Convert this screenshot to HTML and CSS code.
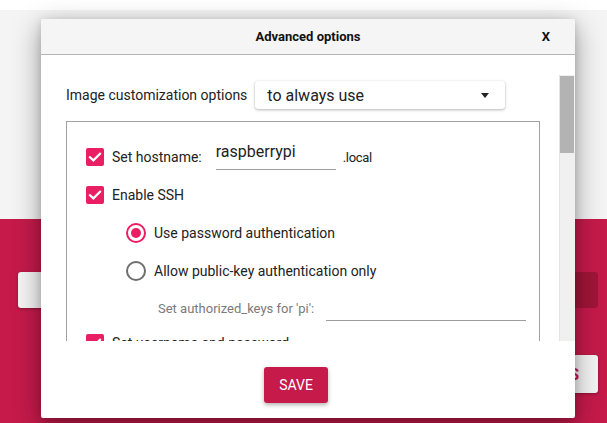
FILE: index.html
```html
<!DOCTYPE html>
<html>
<head>
<meta charset="utf-8">
<link rel="stylesheet" href="styles.css">
</head>
<body>
<div class="app">
  <div class="app-strip"></div>
  <div class="app-top"></div>
  <div class="app-main">
    <div class="app-row">
      <div class="app-btn light">CHOOSE OS</div>
      <div class="app-btn dark">WRITE</div>
    </div>
    <div class="app-row end">
      <div class="app-btn light small"><span class="app-glyph">S</span></div>
    </div>
  </div>
</div>

<div class="dialog">
  <div class="dlg-header">
    <span></span>
    <span class="dlg-title">Advanced options</span>
    <span class="dlg-close">X</span>
  </div>
  <div class="dlg-body">
    <div class="dlg-content">
      <div class="opt-row">
        <span class="opt-label">Image customization options</span>
        <div class="select">
          <span>to always use</span>
          <span class="caret"></span>
        </div>
      </div>
      <div class="group">
        <div class="row">
          <span class="checkbox"><svg width="18" height="18" viewBox="0 0 18 18"><polyline points="4,9.2 7.4,12.4 14,5.8" fill="none" stroke="#fff" stroke-width="2.2" stroke-linecap="square"/></svg></span>
          <span class="txt">Set hostname:</span>
          <span class="field host">raspberrypi</span>
          <span class="suffix">.local</span>
        </div>
        <div class="row">
          <span class="checkbox"><svg width="18" height="18" viewBox="0 0 18 18"><polyline points="4,9.2 7.4,12.4 14,5.8" fill="none" stroke="#fff" stroke-width="2.2" stroke-linecap="square"/></svg></span>
          <span class="txt">Enable SSH</span>
        </div>
        <div class="row indent">
          <span class="radio on"></span>
          <span class="txt">Use password authentication</span>
        </div>
        <div class="row indent">
          <span class="radio"></span>
          <span class="txt">Allow public-key authentication only</span>
        </div>
        <div class="row auth">
          <span class="auth-label">Set authorized_keys for 'pi':</span>
          <span class="field keys"></span>
        </div>
        <div class="row last">
          <span class="checkbox"><svg width="18" height="18" viewBox="0 0 18 18"><polyline points="4,9.2 7.4,12.4 14,5.8" fill="none" stroke="#fff" stroke-width="2.2" stroke-linecap="square"/></svg></span>
          <span class="txt">Set username and password</span>
        </div>
      </div>
    </div>
    <div class="scrollbar">
      <div class="track"><div class="thumb"></div></div>
    </div>
  </div>
  <div class="dlg-footer">
    <div class="save">SAVE</div>
  </div>
</div>
</body>
</html>
```
FILE: styles.css
```css
html, body {
  margin: 0;
  padding: 0;
}
body {
  width: 607px;
  height: 423px;
  overflow: hidden;
  position: relative;
  font-family: Roboto, "Liberation Sans", sans-serif;
  color: #212121;
}
.app {
  display: flex;
  flex-direction: column;
  height: 423px;
}
.app-strip {
  height: 10px;
  background: #ffffff;
}
.app-top {
  height: 209px;
  background: #f4f4f4;
}
.app-main {
  flex: 1;
  background: #c51a4a;
  padding-top: 53px;
}
.app-row {
  display: flex;
  justify-content: space-between;
  padding: 0 9px 0 18px;
}
.app-row.end {
  justify-content: flex-end;
  margin-top: 47px;
}
.app-btn {
  width: 170px;
  height: 36px;
  border-radius: 3px;
  display: flex;
  align-items: center;
  justify-content: center;
  font-size: 14px;
}
.app-btn.light {
  background: #f5f5f5;
  color: #c51a4a;
  box-shadow: 0 1px 3px rgba(0,0,0,0.3);
}
.app-btn.dark {
  background: #a01538;
  color: #c0506e;
}
.app-btn.small {
  height: 38px;
  justify-content: flex-end;
  padding-right: 19px;
  box-sizing: border-box;
}
.app-glyph {
  font-weight: bold;
  font-size: 16px;
  color: #c51a4a;
}

.dialog {
  position: absolute;
  left: 41px;
  top: 19px;
  width: 534px;
  height: 399px;
  background: #ffffff;
  border-radius: 2px;
  display: flex;
  flex-direction: column;
  overflow: hidden;
  box-shadow: 0 8px 28px rgba(0,0,0,0.38), 0 2px 8px rgba(0,0,0,0.15);
}
.dlg-header {
  height: 35px;
  flex: none;
  background: #f5f5f5;
  border-bottom: 1px solid #b5b5b5;
  display: grid;
  grid-template-columns: 1fr auto 1fr;
  align-items: center;
}
.dlg-title {
  font-size: 13px;
  font-weight: bold;
  color: #111;
}
.dlg-close {
  justify-self: end;
  padding-right: 25px;
  font-size: 13px;
  font-weight: bold;
  color: #111;
}
.dlg-body {
  height: 286px;
  flex: none;
  display: flex;
}
.dlg-content {
  flex: 1;
  overflow: hidden;
  padding: 26px 0 0 25px;
}
.opt-row {
  display: flex;
  align-items: center;
  gap: 8px;
  height: 28px;
}
.opt-label {
  font-size: 14px;
  color: #222;
}
.select {
  width: 250px;
  height: 28px;
  box-sizing: border-box;
  border-radius: 3px;
  background: #fff;
  box-shadow: 0 1px 3px rgba(0,0,0,0.28), 0 0 1px rgba(0,0,0,0.12);
  display: flex;
  align-items: center;
  justify-content: space-between;
  padding: 0 16px 0 12px;
  font-size: 16px;
  color: #222;
}
.caret {
  width: 0;
  height: 0;
  border-left: 4.5px solid transparent;
  border-right: 4.5px solid transparent;
  border-top: 5px solid #222;
}
.group {
  margin-top: 12px;
  width: 474px;
  box-sizing: border-box;
  border: 1px solid #a0a0a0;
  border-bottom: none;
  padding: 16px 0 0 19px;
  height: 240px;
}
.row {
  display: flex;
  align-items: center;
  height: 38px;
}
.row.indent {
  padding-left: 40px;
}
.row.auth {
  height: 36px;
  padding-left: 72px;
}
.row.last {
  height: 34px;
}
.checkbox {
  width: 18px;
  height: 18px;
  border-radius: 2px;
  background: #e91e63;
  flex: none;
  display: block;
}
.checkbox svg {
  display: block;
}
.txt {
  margin-left: 8px;
  font-size: 14px;
  color: #222;
}
.field {
  box-sizing: border-box;
  height: 26px;
  border-bottom: 1px solid #9e9e9e;
  display: block;
}
.field.host {
  margin-left: 14px;
  width: 120px;
  font-size: 16px;
  line-height: 16px;
  color: #222;
}
.suffix {
  margin-left: 7px;
  font-size: 13px;
  color: #222;
  letter-spacing: -0.3px;
}
.radio {
  width: 20px;
  height: 20px;
  box-sizing: border-box;
  border-radius: 50%;
  border: 2px solid #6e6e6e;
  flex: none;
  display: flex;
  align-items: center;
  justify-content: center;
}
.radio.on {
  border-color: #e91e63;
}
.radio.on::after {
  content: "";
  width: 10px;
  height: 10px;
  border-radius: 50%;
  background: #e91e63;
}
.auth-label {
  font-size: 13px;
  color: #7a7a7a;
}
.field.keys {
  margin-left: 12px;
  width: 200px;
}
.scrollbar {
  width: 16px;
  flex: none;
  padding-top: 20px;
}
.track {
  height: 266px;
  background: #f0f0f0;
  border-left: 1px solid #e4e4e4;
  box-sizing: border-box;
  padding: 1px 1px 0 0;
}
.thumb {
  height: 77px;
  background: #b3b3b3;
}
.dlg-footer {
  flex: 1;
  padding: 26px 0 0 223px;
}
.save {
  width: 64px;
  height: 36px;
  border-radius: 3px;
  background: #c51a4a;
  color: #fff;
  font-size: 14px;
  display: flex;
  align-items: center;
  justify-content: center;
  box-shadow: 0 2px 4px rgba(0,0,0,0.3);
}
```
